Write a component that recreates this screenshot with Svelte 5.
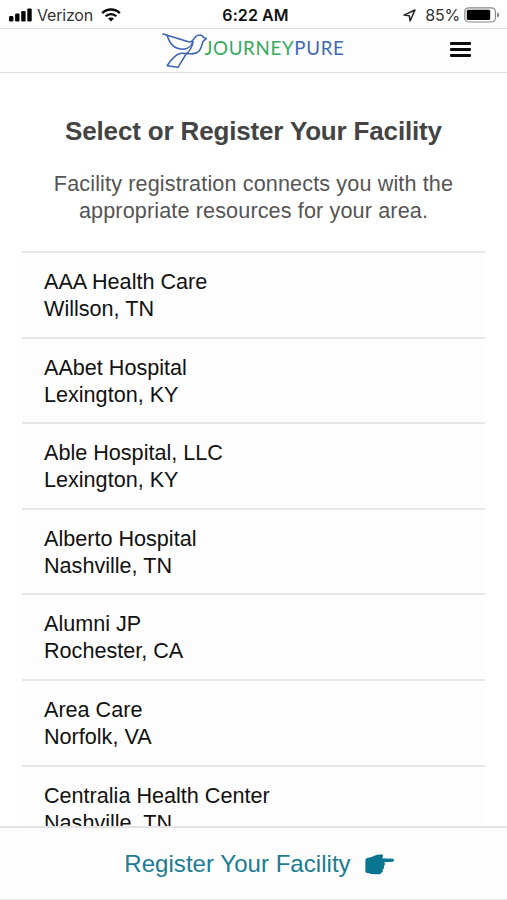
<script lang="ts">
	type Facility = { name: string; city: string };

	const facilities: Facility[] = [
		{ name: 'AAA Health Care', city: 'Willson, TN' },
		{ name: 'AAbet Hospital', city: 'Lexington, KY' },
		{ name: 'Able Hospital, LLC', city: 'Lexington, KY' },
		{ name: 'Alberto Hospital', city: 'Nashville, TN' },
		{ name: 'Alumni JP', city: 'Rochester, CA' },
		{ name: 'Area Care', city: 'Norfolk, VA' },
		{ name: 'Centralia Health Center', city: 'Nashville, TN' }
	];
</script>

<div class="screen">
	<div class="status">
		<div class="carrier">
			<svg width="24" height="14" viewBox="0 0 24 14" aria-hidden="true">
				<rect x="0" y="8" width="4.4" height="5.4" rx="1.2" />
				<rect x="6.1" y="5.6" width="4.4" height="7.8" rx="1.2" />
				<rect x="12.2" y="3" width="4.4" height="10.4" rx="1.2" />
				<rect x="18.3" y="0.4" width="4.4" height="13" rx="1.2" />
			</svg>
			<span class="network">Verizon</span>
			<svg class="wifi" width="20" height="14" viewBox="0 0 20 14" fill="none" stroke="#080808" aria-hidden="true">
				<path d="M1.2 5.1C6 .2 14 .2 18.8 5.1" stroke-width="2.5" />
				<path d="M4.6 8.3C7.6 5.3 12.4 5.3 15.4 8.3" stroke-width="2.3" />
				<path d="M10 13.4 7 10.5C8.5 9 11.5 9 13 10.5Z" fill="#080808" stroke="none" />
			</svg>
		</div>
		<span class="time">6:22 AM</span>
		<div class="power">
			<svg width="13" height="13" viewBox="0 0 13 13" fill="none" stroke="#222" stroke-width="1.5" stroke-linejoin="round" aria-hidden="true">
				<path d="M12 1 1 6.1 6.3 6.7 7.1 12Z" />
			</svg>
			<span class="percent">85%</span>
			<svg width="36" height="16" viewBox="0 0 36 16" aria-hidden="true">
				<rect x="0.8" y="0.8" width="30.6" height="14.2" rx="4" fill="#fff" stroke="#888" stroke-width="1.2" />
				<rect x="2.8" y="2.8" width="23.4" height="10.2" rx="1.5" />
				<path d="M33 5.2Q35.3 6 35.3 7.9T33 10.6Z" fill="#888" />
			</svg>
		</div>
	</div>

	<header>
		<div class="logo">
			<svg width="45" height="36" viewBox="0 0 45 36" fill="none" stroke="#3c62b2" stroke-width="1.5" stroke-linejoin="round" stroke-linecap="round" aria-hidden="true">
				<path d="M1 1 26.5 8.8C30.5 9.7 31 7 33 4.3C35.5 1.3 40 1 41.6 4.6L44.5 5.4 41 8.3C39.5 12 39.5 20.5 30.5 20.7" />
				<path d="M5.2 2.3C7 9 11.5 15.8 20 16.2C25.5 16.3 29.5 13 30.8 8.7" />
				<path d="M31 9C30 15 27 19 23.5 22L16 34.3 5.2 32.7C8 28.5 12 21.5 18.5 20.4C23 19.8 27 21.5 31 20.6" />
			</svg>
			<span class="wordmark"><span class="journey">JOURNEY</span>PURE</span>
		</div>
		<button class="menu" aria-label="Menu">
			<span></span>
			<span></span>
			<span></span>
		</button>
	</header>

	<main>
		<h1>Select or Register Your Facility</h1>
		<p class="intro">Facility registration connects you with the appropriate resources for your area.</p>
		<ul>
			{#each facilities as facility}
				<li>
					<div>{facility.name}</div>
					<div>{facility.city}</div>
				</li>
			{/each}
		</ul>
	</main>

	<footer>
		<button class="register">
			<span>Register Your Facility</span>
			<svg width="30" height="21" viewBox="0 0 30 21" fill="#09758f" aria-hidden="true">
				<path d="M1.5 4.3C4 3.2 7 3.1 10 1.4C12.4.3 15.5.3 17.4.6C18.6 1.1 18 3.4 17 4.2L27.5 4.7C29.7 5 29.6 7.6 27.5 7.7L19 8.3C20.6 9.5 20.2 11.4 18.7 12C19.7 13.3 19 15 17.6 15.5C18.5 17.2 17.5 18.3 16.4 18.7C15.8 20.3 14.5 20.3 12.5 20.3L6 20C4.5 19.5 3 18.9 1.2 18.8Q.4 18.5.4 17.5V6Q.5 4.7 1.5 4.3Z" />
			</svg>
		</button>
	</footer>
</div>

<style>
	:global(body) { margin: 0; background: #fff; }

	.screen { display: flex; flex-direction: column; height: 900px; overflow: hidden; background: #fff; color: #111; font-family: "Liberation Sans", Arial, sans-serif; }
	button { padding: 0; border: 0; background: none; font: inherit; }

	.status { box-sizing: border-box; flex: none; display: grid; grid-template-columns: 1fr auto 1fr; align-items: center; height: 28px; padding: 2px 7px 0 9px; font-family: Inter, sans-serif; font-size: 16px; }
	.carrier, .power { display: flex; align-items: center; }
	.network { margin-left: 4px; font-size: 16px; letter-spacing: -0.2px; color: #333; }
	.wifi { margin-left: 8px; }
	.time { padding-left: 2px; font-weight: 600; letter-spacing: 0.1px; }
	.power { justify-content: flex-end; }
	.percent { margin: 0 4px 0 9px; color: #333; letter-spacing: -0.2px; }

	header { box-sizing: border-box; flex: none; display: grid; grid-template-columns: 1fr auto 1fr; align-items: center; height: 45px; border-top: 1px solid #dedede; border-bottom: 1px solid #dedede; background: #fdfdfd; }
	.logo { grid-column: 2; display: flex; align-items: center; }
	.wordmark { margin: -5px 0 0 -3px; font-family: Lato, sans-serif; font-size: 18.7px; letter-spacing: 0.7px; color: #4168b4; }
	.journey { color: #35a95d; }
	.menu { justify-self: end; display: flex; flex-direction: column; gap: 3px; width: 21px; margin: 0 36px 3px 0; }
	.menu span { height: 3px; border-radius: 1px; background: #0b0b0b; }

	main { flex: 1; min-height: 0; overflow: hidden; padding: 0 22px; }
	h1 { margin: 43px 0 0; font-size: 26px; line-height: 30px; letter-spacing: -0.16px; text-align: center; color: #444; }
	.intro { margin: 24px 0 27px; font-size: 21.6px; line-height: 27px; letter-spacing: 0.13px; text-align: center; color: #555; }
	ul { margin: 0; padding: 0; list-style: none; background: #fdfdfd; }
	li { box-sizing: border-box; height: 85.6px; padding: 15px 22px 0; border-top: 2px solid #e6e6e6; font-size: 21.6px; line-height: 27px; }

	footer { box-sizing: border-box; flex: none; display: flex; justify-content: center; height: 74px; border-top: 2px solid #e3e3e3; border-bottom: 1px solid #e3e3e3; background: #fdfdfd; }
	.register { display: flex; align-items: center; gap: 14px; margin: 1px 0 0 12px; font-size: 24px; letter-spacing: 0.04px; color: #1b7c93; }
</style>
